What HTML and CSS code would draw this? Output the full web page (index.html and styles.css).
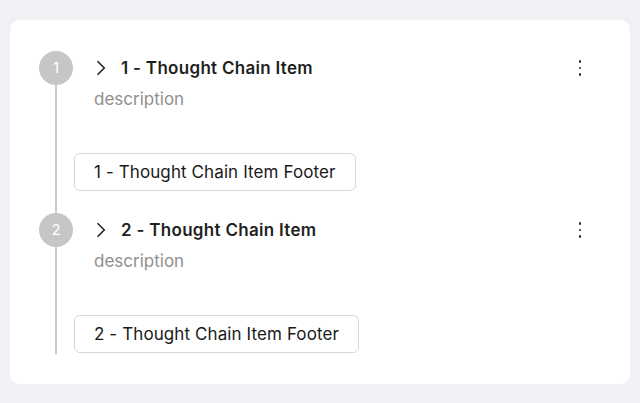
FILE: index.html
```html
<!DOCTYPE html>
<html>
<head>
<meta charset="utf-8">
<link rel="stylesheet" href="styles.css">
</head>
<body>
<div class="card">
  <div class="item">
    <div class="rail">
      <div class="dot">1</div>
      <div class="line"></div>
    </div>
    <div class="body">
      <div class="header">
        <svg class="chev" width="11" height="16" viewBox="0 0 11 16"><path d="M2.5 1.2 L9.3 8 L2.5 14.8" fill="none" stroke="#1f1f1f" stroke-width="1.5"/></svg>
        <span class="title">1 - Thought Chain Item</span>
        <span class="more"><i></i><i></i><i></i></span>
      </div>
      <div class="desc">description</div>
      <div class="footer">1 - Thought Chain Item Footer</div>
    </div>
  </div>
  <div class="item last">
    <div class="rail">
      <div class="dot">2</div>
      <div class="line"></div>
    </div>
    <div class="body">
      <div class="header">
        <svg class="chev" width="11" height="16" viewBox="0 0 11 16"><path d="M2.5 1.2 L9.3 8 L2.5 14.8" fill="none" stroke="#1f1f1f" stroke-width="1.5"/></svg>
        <span class="title">2 - Thought Chain Item</span>
        <span class="more"><i></i><i></i><i></i></span>
      </div>
      <div class="desc">description</div>
      <div class="footer">2 - Thought Chain Item Footer</div>
    </div>
  </div>
</div>
</body>
</html>
```
FILE: styles.css
```css
html, body { margin: 0; padding: 0; }
body {
  background: #f0f1f4;
  font-family: Inter, "Noto Sans", "Liberation Sans", sans-serif;
  width: 640px; height: 403px; overflow: hidden;
}
.card {
  margin: 20px 10px 0 10px;
  height: 364px;
  box-sizing: border-box;
  background: #ffffff;
  border-radius: 9px;
  padding: 31px 40px 30px 29px;
}
.item { display: flex; }
.rail { width: 34px; display: flex; flex-direction: column; align-items: center; }
.dot {
  width: 34px; height: 34px; border-radius: 50%;
  background: #c6c6c6; color: #ffffff;
  font-size: 15px; line-height: 34px; text-align: center;
  flex: none;
}
.line { flex: 1; width: 2.5px; background: #cbcbcb; }
.item.last .line { margin-bottom: -1px; }
.body { flex: 1; display: flex; flex-direction: column; align-items: flex-start; padding-bottom: 22px; }
.item.last .body { padding-bottom: 0; }
.header { height: 34px; display: flex; align-items: center; width: 100%; padding-left: 22px; box-sizing: border-box; }
.chev { flex: none; margin-right: 15px; }
.title { font-size: 17px; font-weight: 600; color: #1f1f1f; flex: 1; letter-spacing: 0.3px; }
.more { width: 20px; display: flex; flex-direction: column; align-items: center; gap: 4px; }
.more i { display: block; width: 2.6px; height: 2.6px; border-radius: 50%; background: #2a2a2a; }
.desc { padding-left: 21px; margin-top: 2px; font-size: 17px; line-height: 24px; color: #8f8f8f; }
.footer {
  margin-top: 42px; margin-left: 1px; height: 38px; box-sizing: border-box;
  border: 1px solid #d6d6d6; border-radius: 6px;
  padding: 0 19px; display: flex; align-items: center;
  font-size: 17px; color: #1a1a1a; letter-spacing: 0.1px;
}
```
